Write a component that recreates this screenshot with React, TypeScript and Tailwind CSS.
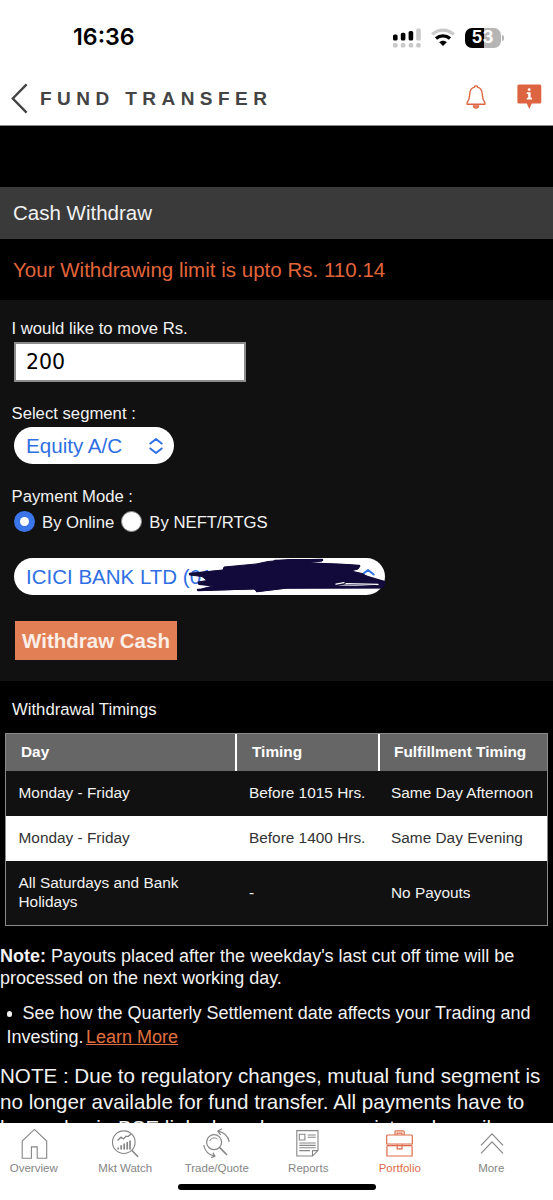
import { useState } from 'react'
import type { ReactNode } from 'react'

interface TabItemProps {
  label: string
  icon: ReactNode
  active?: boolean
  onClick: () => void
}

const timings = [
  { day: 'Monday - Friday', timing: 'Before 1015 Hrs.', fulfillment: 'Same Day Afternoon' },
  { day: 'Monday - Friday', timing: 'Before 1400 Hrs.', fulfillment: 'Same Day Evening' },
  { day: 'All Saturdays and Bank Holidays', timing: '-', fulfillment: 'No Payouts' },
]

function SignalIcon() {
  return (
    <svg width="30" height="22" viewBox="0 0 30 22">
      <g fill="#000">
        <rect x="1" y="7.5" width="4.6" height="6" rx="1.6" />
        <rect x="8.8" y="5.8" width="4.6" height="7.7" rx="1.6" />
        <rect x="16.6" y="4" width="4.6" height="9.5" rx="1.6" />
      </g>
      <g fill="#c9c9c9">
        <rect x="24.2" y="1.5" width="4.6" height="12" rx="1.6" />
        <rect x="1" y="16" width="4.6" height="4.6" rx="1.6" />
        <rect x="8.8" y="16" width="4.6" height="4.6" rx="1.6" />
        <rect x="16.6" y="16" width="4.6" height="4.6" rx="1.6" />
        <rect x="24.2" y="16" width="4.6" height="4.6" rx="1.6" />
      </g>
    </svg>
  )
}

function WifiIcon() {
  return (
    <svg width="24" height="19" viewBox="0 0 24 19" fill="none">
      <path d="M1.2 6.4 C7.5 0.6 16.5 0.6 22.8 6.4" stroke="#c9c9c9" strokeWidth="3.2" />
      <path d="M5 10.6 C9 7 15 7 19 10.6" stroke="#000" strokeWidth="3.3" />
      <path d="M8.2 14.2 C10.3 12.2 13.7 12.2 15.8 14.2 L12 18 Z" fill="#000" />
    </svg>
  )
}

function Battery() {
  return (
    <div className="flex items-center">
      <div className="flex h-[20px] w-[36px] items-center justify-center rounded-[7px] bg-[linear-gradient(90deg,#000_53%,#b5b5b5_53%)] font-['Inter'] text-[17px] font-bold leading-none text-white">
        53
      </div>
      <div className="ml-[1.5px] h-[6px] w-[2px] rounded-r-full bg-[#b5b5b5]" />
    </div>
  )
}

function BellIcon() {
  return (
    <svg width="20" height="26" viewBox="0 0 20 26" fill="none" stroke="#dd6440" strokeWidth="1.4" strokeLinejoin="round">
      <path d="M8.6 3.1 C8.3 1.4 11.7 1.4 11.4 3.1 C14.9 4 16.3 6.8 16.3 10.3 C16.3 14.5 16.9 16.2 18.9 18.7 V20.3 H1.1 V18.7 C3.1 16.2 3.7 14.5 3.7 10.3 C3.7 6.8 5.1 4 8.6 3.1 Z" />
      <path d="M7.4 22 H12.6 C12.2 24.6 7.8 24.6 7.4 22 Z" />
    </svg>
  )
}

function InfoBubble() {
  return (
    <svg width="25" height="26" viewBox="0 0 25 26">
      <path d="M1.8 0.6 H22.8 Q24.3 0.6 24.3 2.1 V18 Q24.3 19.5 22.8 19.5 H14.8 L12.3 25 L9.8 19.5 H1.8 Q0.4 19.5 0.4 18 V2.1 Q0.4 0.6 1.8 0.6 Z" fill="#dd6440" />
      <circle cx="12.2" cy="5.6" r="1.4" fill="#fff" />
      <path d="M9.8 8.3 H13.6 V13.8 H15 V15.5 H9.8 V13.8 H11.2 V10 H9.8 Z" fill="#fff" />
    </svg>
  )
}

function SelectChevrons() {
  return (
    <svg width="14" height="16" viewBox="0 0 14 16" fill="none" stroke="#2f6fe4" strokeWidth="1.9" strokeLinecap="round" strokeLinejoin="round">
      <path d="M1.3 5.6 L7 1.1 L12.7 5.6" />
      <path d="M1.3 10.4 L7 14.9 L12.7 10.4" />
    </svg>
  )
}

function Scribble() {
  return (
    <svg className="absolute -top-[3px] left-[171px]" width="206" height="44" viewBox="185 555 206 44" fill="none" stroke="#110a3a" strokeLinecap="round" strokeLinejoin="round">
      <path
        d="M190 573.5 L223 570 L224 567 L256 564 L268 561.5 L290 559.5 L322 559.5 L322 561 L305 563 L348 564.5 L360 566 L358 569 L351 571 L362 573.5 L374 580 L384 582 L384 586 L345 584 L334 586 L383 586.5 L382 588 L287 588 L257 591.5 L254 589 L198 590.5 L203 588.5 L213 586 L199 584.5 L198 582 L207 580.5 L202 576.5 L190 575 Z"
        fill="#110a3a"
        strokeWidth="1"
      />
      <path d="M190 574 L224 571 M275 561 L322 560 M300 563 L359 566 L345 570 M350 572 L384 582" strokeWidth="2.6" />
      <path d="M345 578 C352 582 366 583 384 583 M384 583 L383 587 L285 587.5 L257 591 M198 590 L256 588 M199 583.5 L215 583" strokeWidth="2.4" />
      <path d="M336 584.2 L344 582.6 M346 583.6 L378 584.4" stroke="#fff" strokeWidth="1.3" />
    </svg>
  )
}

const tabIcons: Record<string, ReactNode> = {
  Overview: (
    <svg width="28" height="32" viewBox="0 0 28 32" fill="none" stroke="currentColor" strokeWidth="1.1">
      <path d="M14.4 1.4 L26.7 13 V30.3 H17.2 V18.9 H11.4 V30.3 H2.2 V13 Z" />
    </svg>
  ),
  'Mkt Watch': (
    <svg width="28" height="32" viewBox="0 0 28 32" fill="none" stroke="currentColor" strokeWidth="1.1">
      <circle cx="12.8" cy="14.2" r="11.3" />
      <path d="M20.7 22.2 L27 28.8" strokeWidth="1.6" />
      <path d="M6.5 12.5 L10 9.2 L12.5 11 L15 8.2 L17 8.6 L20 6" strokeWidth="1.3" />
      <path d="M7.2 21.5 V19.5 M10.2 21.5 V17.3 M13.2 21.5 V15.6 M16.2 21.5 V14 M19 21.5 V12.5" strokeWidth="1.7" />
    </svg>
  ),
  'Trade/Quote': (
    <svg width="28" height="32" viewBox="0 0 28 32" fill="none" stroke="currentColor" strokeWidth="1.2">
      <circle cx="11.1" cy="14.2" r="7.5" />
      <path d="M6.8 13 C7.8 9.6 12.3 9 14.6 11.2" strokeWidth="1" />
      <path d="M16.8 19.6 L24 27" strokeWidth="1.6" />
      <path d="M26.2 13.8 C25.2 8.6 21.6 4.6 15 3.2 M18.8 0.8 L14.8 3.2 L17.6 6.8" />
      <path d="M0.7 17 C1.7 22.4 5.7 27 11.7 28.2 M8.1 29.6 L11.9 28.2 L9.9 24.6" />
    </svg>
  ),
  Reports: (
    <svg width="28" height="32" viewBox="0 0 28 32" fill="none" stroke="currentColor" strokeWidth="1.1">
      <path d="M2.8 2.6 H24 V22.6 L18.5 28 H2.8 Z M24 22.6 H18.5 V28" />
      <path d="M5.3 6.2 H10.9 V12 H5.3 Z M13.7 7 H21.7 M13.7 9.2 H21.7 M5.3 15 H21.7 M5.3 17.4 H21.7 M5.3 19.8 H21.7 M5.3 22.6 H15.9" />
    </svg>
  ),
  Portfolio: (
    <svg width="28" height="32" viewBox="0 0 28 32" fill="none" stroke="currentColor" strokeWidth="1.2">
      <path d="M0.7 7.8 Q0.7 7 1.5 7 H25.5 Q26.3 7 26.3 7.8 V16 H0.7 Z M0.9 18.2 V28 H26.1 V18.2" />
      <path d="M0.7 17.6 H26.3" strokeWidth="1.4" />
      <path d="M9 7 V4 Q9 2.8 10.2 2.8 H17 Q18.2 2.8 18.2 4 V7 M11.2 7 V5.2 H16 V7 M11.2 16.4 V20.8 H16 V16.4" />
    </svg>
  ),
  More: (
    <svg width="28" height="32" viewBox="0 0 28 32" fill="none" stroke="currentColor" strokeWidth="1.2">
      <path d="M4 17.4 L15 5.8 L26 17.4 M4 25.4 L15 13.8 L26 25.4" />
    </svg>
  ),
}

function TabItem({ label, icon, active = false, onClick }: TabItemProps) {
  return (
    <button
      onClick={onClick}
      className={`flex flex-1 flex-col items-center pt-[5px] ${active ? 'text-[#dd6b4b]' : 'text-[#868686]'}`}
    >
      {icon}
      <span className="mt-px whitespace-nowrap text-[11.5px] leading-[14px]">{label}</span>
    </button>
  )
}

function Radio({ label, checked, onChange }: { label: string; checked: boolean; onChange: () => void }) {
  return (
    <label className="flex items-start">
      <input type="radio" checked={checked} onChange={onChange} className="sr-only" />
      <span
        className={`flex size-[21px] items-center justify-center rounded-full ${
          checked ? 'bg-[#3a76ea]' : 'border-[1.5px] border-[#8a8a8a] bg-white'
        }`}
      >
        {checked && <span className="size-[9px] rounded-full bg-white" />}
      </span>
      <span className="ml-[7px] mt-[2px] text-[16.7px] leading-5">{label}</span>
    </label>
  )
}

export default function App() {
  const [amount, setAmount] = useState('200')
  const [mode, setMode] = useState('online')
  const [tab, setTab] = useState('Portfolio')

  return (
    <div className="flex h-[1200px] w-[553px] flex-col overflow-hidden bg-black font-['Liberation_Sans',Arial,sans-serif] text-[#f2f2f2]">
      {/* Status Bar */}
      <div className="flex h-[72px] shrink-0 items-center justify-between bg-white pl-[73px] pr-[49px] pt-[3px]">
        <span className="font-['Inter',sans-serif] text-[23.2px] font-semibold leading-none text-black">16:36</span>
        <div className="flex items-center">
          <SignalIcon />
          <div className="ml-[9px] mr-[10px] flex">
            <WifiIcon />
          </div>
          <Battery />
        </div>
      </div>

      {/* Title Bar */}
      <header className="flex h-[54px] shrink-0 items-center border-b border-[#8a8a8a] bg-white pl-[11px] pr-[11px]">
        <svg width="17" height="31" viewBox="0 0 17 31" fill="none" stroke="#444" strokeWidth="2.4">
          <path d="M15.6 1.4 L1.8 15.5 L15.6 29.6" />
        </svg>
        <h1 className="ml-[12px] whitespace-nowrap text-[19px] font-bold leading-none tracking-[5.45px] text-[#444]">FUND TRANSFER</h1>
        <div className="ml-auto flex items-center gap-[31px] pb-[4px]">
          <BellIcon />
          <InfoBubble />
        </div>
      </header>

      <main className="min-h-0 flex-1 overflow-hidden">
        <h2 className="mt-[61px] h-[52px] bg-[#3a3a3a] pl-[13px] text-[20.5px] leading-[52px]">Cash Withdraw</h2>
        <p className="h-[61px] pl-[13px] text-[20.5px] leading-[62px] tracking-[0.02px] text-[#e2653a]">Your Withdrawing limit is upto Rs. 110.14</p>

        {/* Withdrawal Form */}
        <section className="flex h-[381px] flex-col items-start bg-[#111] pl-[14px] pt-[17px]">
          <label className="-ml-[2.5px] text-[16.7px] leading-6">I would like to move Rs.</label>
          <input
            value={amount}
            onChange={(e) => setAmount(e.target.value)}
            className="mt-px h-[40px] w-[232px] border-2 border-[#8c8c8c] bg-white px-[10px] font-['DejaVu_Sans',sans-serif] text-[20.5px] text-black outline-none"
          />
          <label className="-ml-[2.5px] mt-[20px] text-[16.7px] leading-6">Select segment :</label>
          <button className="mt-px flex h-[37px] w-[160px] items-center justify-between rounded-full bg-white pl-[12px] pr-[11px] text-[20.6px] leading-[37px] text-[#2f6fe4]">
            Equity A/C
            <SelectChevrons />
          </button>
          <label className="-ml-[2.5px] mt-[21px] text-[16.7px] leading-6">Payment Mode :</label>
          <div className="mt-[2px] flex gap-[7px]">
            <Radio label="By Online" checked={mode === 'online'} onChange={() => setMode('online')} />
            <Radio label="By NEFT/RTGS" checked={mode === 'neft'} onChange={() => setMode('neft')} />
          </div>
          <div className="relative mt-[25px]">
            <button className="flex h-[37px] w-[371px] items-center justify-between rounded-full bg-white pl-[12px] pr-[10px] text-[20.5px] leading-[37px] text-[#2f6fe4]">
              ICICI BANK LTD (01
              <SelectChevrons />
            </button>
            <Scribble />
          </div>
          <button className="ml-px mt-[26px] h-[39px] w-[162px] whitespace-nowrap bg-[#e27f55] text-center text-[20.5px] font-bold leading-[39px] text-[#fbeee6]">
            Withdraw Cash
          </button>
        </section>

        {/* Timings */}
        <h3 className="mt-[17px] pl-[12px] text-[16.7px] leading-6">Withdrawal Timings</h3>
        <table className="ml-[5px] mt-[11px] w-[543px] table-fixed border-separate border-spacing-0 border border-[#8a8a8a] text-left text-[15.4px] leading-[19px]">
          <colgroup>
            <col className="w-[229px]" />
            <col className="w-[143px]" />
            <col />
          </colgroup>
          <thead>
            <tr className="h-[37px] bg-[#666] text-white">
              <th className="pb-[2px] pl-[15px] pt-0">Day</th>
              <th className="border-l-2 border-white pb-[2px] pl-[15px] pt-0">Timing</th>
              <th className="border-l-2 border-white pb-[2px] pl-[14px] pt-0">Fulfillment Timing</th>
            </tr>
          </thead>
          <tbody>
            {timings.map((row, index) => (
              <tr key={index} className={`${index === 1 ? 'bg-white text-[#333]' : 'bg-[#111]'} ${index === 2 ? 'h-[64px]' : 'h-[45px]'}`}>
                <td className="pb-[2px] pl-[12.5px] pr-[50px] pt-0">{row.day}</td>
                <td className="pb-[2px] pl-[14px] pt-0">{row.timing}</td>
                <td className="whitespace-nowrap pb-[2px] pl-[13px] pt-0">{row.fulfillment}</td>
              </tr>
            ))}
          </tbody>
        </table>

        {/* Notes */}
        <p className="mt-[19px] whitespace-nowrap text-[18px] leading-[22px]">
          <b>Note:</b> Payouts placed after the weekday's last cut off time will be
          <br />
          processed on the next working day.
        </p>
        <div className="mt-[12px] whitespace-nowrap pl-[6.5px] text-[18px] leading-[24px]">
          <div className="flex items-center">
            <span className="mr-[10.5px] mt-[2px] size-[5.5px] rounded-full bg-[#f2f2f2]" />
            See how the Quarterly Settlement date affects your Trading and
          </div>
          <div>
            Investing. <a className="-ml-[2.5px] text-[#e0703f] underline">Learn More</a>
          </div>
        </div>
        <p className="mt-[14px] whitespace-nowrap text-[20.6px] leading-[26px]">
          NOTE : Due to regulatory changes, mutual fund segment is
          <br />
          no longer available for fund transfer. All payments have to
          <br />
          be made via BSE link shared on your registered email
        </p>
      </main>

      {/* Tab Bar */}
      <nav className="flex h-[77px] shrink-0 flex-col items-center bg-white">
        <div className="-ml-[12px] flex w-[549px] self-start">
          {Object.keys(tabIcons).map((label) => (
            <TabItem key={label} label={label} icon={tabIcons[label]} active={tab === label} onClick={() => setTab(label)} />
          ))}
        </div>
        <div className="mt-[9px] h-[6px] w-[198px] rounded-full bg-black" />
      </nav>
    </div>
  )
}
